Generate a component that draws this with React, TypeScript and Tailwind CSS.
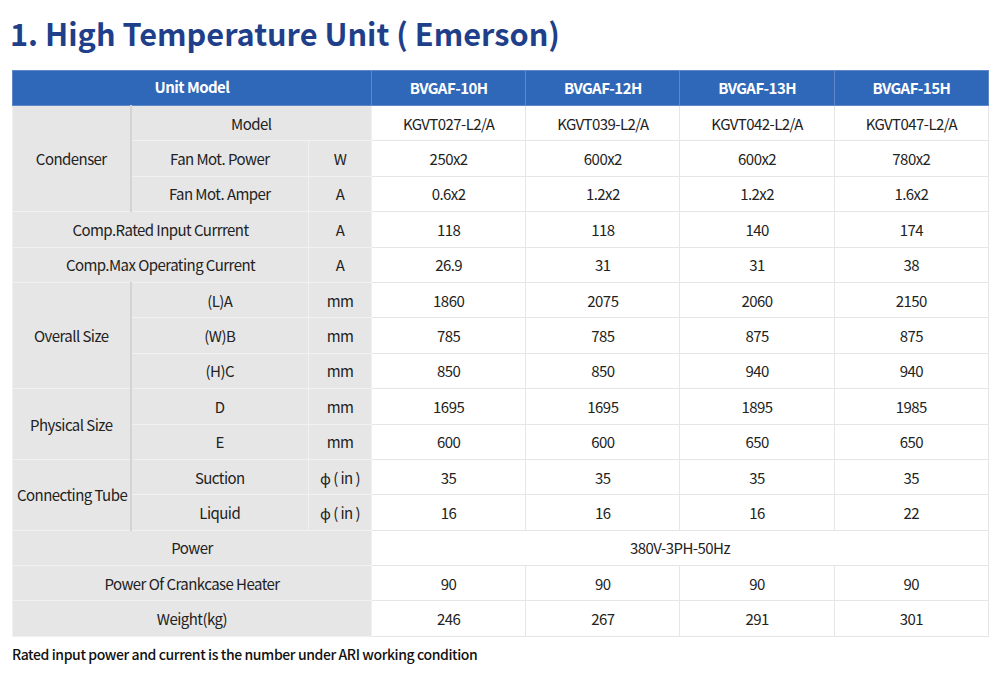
const font = { fontFamily: '"Noto Sans CJK SC", "Noto Sans", sans-serif' };

const models = ["BVGAF-10H", "BVGAF-12H", "BVGAF-13H", "BVGAF-15H"];

type Row = {
  group?: { label: string; span: number };
  label: string;
  unit?: string;
  wide?: boolean; // label spans col 2+3
  full?: boolean; // label spans cols 1-3
  values: string[];
  merged?: boolean;
};

const rows: Row[] = [
  { group: { label: "Condenser", span: 3 }, label: "Model", wide: true, values: ["KGVT027-L2/A", "KGVT039-L2/A", "KGVT042-L2/A", "KGVT047-L2/A"] },
  { label: "Fan Mot. Power", unit: "W", values: ["250x2", "600x2", "600x2", "780x2"] },
  { label: "Fan Mot. Amper", unit: "A", values: ["0.6x2", "1.2x2", "1.2x2", "1.6x2"] },
  { label: "Comp.Rated Input Currrent", unit: "A", full: true, values: ["118", "118", "140", "174"] },
  { label: "Comp.Max Operating Current", unit: "A", full: true, values: ["26.9", "31", "31", "38"] },
  { group: { label: "Overall Size", span: 3 }, label: "(L)A", unit: "mm", values: ["1860", "2075", "2060", "2150"] },
  { label: "(W)B", unit: "mm", values: ["785", "785", "875", "875"] },
  { label: "(H)C", unit: "mm", values: ["850", "850", "940", "940"] },
  { group: { label: "Physical Size", span: 2 }, label: "D", unit: "mm", values: ["1695", "1695", "1895", "1985"] },
  { label: "E", unit: "mm", values: ["600", "600", "650", "650"] },
  { group: { label: "Connecting Tube", span: 2 }, label: "Suction", unit: "ϕ ( in )", values: ["35", "35", "35", "35"] },
  { label: "Liquid", unit: "ϕ ( in )", values: ["16", "16", "16", "22"] },
  { label: "Power", full: true, values: ["380V-3PH-50Hz"], merged: true },
  { label: "Power Of Crankcase Heater", full: true, values: ["90", "90", "90", "90"] },
  { label: "Weight(kg)", full: true, values: ["246", "267", "291", "301"] },
];

const grayCell = "bg-[#e6e6e6] border border-[#f1f1f1] text-center align-middle h-[35.4px] px-1 whitespace-nowrap";
const dataCell = "bg-white border border-[#e6e6e6] text-center align-middle h-[35.4px]";

export default function App() {
  return (
    <div className="w-[1000px] h-[681px] bg-white text-[#222]" style={font}>
      <h1 className="pl-[10px] pt-[13px] text-[30.7px] font-bold leading-[40px] text-[#1f3f8b]">
        1. High Temperature Unit ( Emerson)
      </h1>

      <table className="ml-[12px] mt-[17px] w-[977px] table-fixed border-collapse text-[15px] leading-none tracking-[-0.55px]">
        <colgroup>
          <col className="w-[118px]" />
          <col className="w-[178px]" />
          <col className="w-[63px]" />
          <col />
          <col />
          <col />
          <col />
        </colgroup>
        <thead>
          <tr>
            <th colSpan={3} className="h-[35px] pb-[3px] bg-[#2f68b9] border border-[#5f88c6] text-white font-bold">
              Unit Model
            </th>
            {models.map((m) => (
              <th key={m} className="h-[35px] pb-[1px] bg-[#2f68b9] border border-[#5f88c6] text-white font-bold">
                {m}
              </th>
            ))}
          </tr>
        </thead>
        <tbody>
          {rows.map((r, i) => (
            <tr key={i}>
              {r.group && (
                <td rowSpan={r.group.span} className={grayCell + " border-r-2 border-r-[#d4d4d4]"}>
                  {r.group.label}
                </td>
              )}
              {r.full ? (
                r.unit ? (
                  <>
                    <td colSpan={2} className={grayCell}>{r.label}</td>
                    <td className={grayCell}>{r.unit}</td>
                  </>
                ) : (
                  <td colSpan={3} className={grayCell}>{r.label}</td>
                )
              ) : r.wide ? (
                <td colSpan={2} className={grayCell}>{r.label}</td>
              ) : (
                <>
                  <td className={grayCell}>{r.label}</td>
                  <td className={grayCell}>{r.unit}</td>
                </>
              )}
              {r.merged ? (
                <td colSpan={4} className={dataCell}>{r.values[0]}</td>
              ) : (
                r.values.map((v, j) => (
                  <td key={j} className={dataCell}>{v}</td>
                ))
              )}
            </tr>
          ))}
        </tbody>
      </table>

      <p className="pl-[12px] pt-[7px] text-[14px] font-medium tracking-[-0.4px] text-[#111]">
        Rated input power and current is the number under ARI working condition
      </p>
    </div>
  );
}
